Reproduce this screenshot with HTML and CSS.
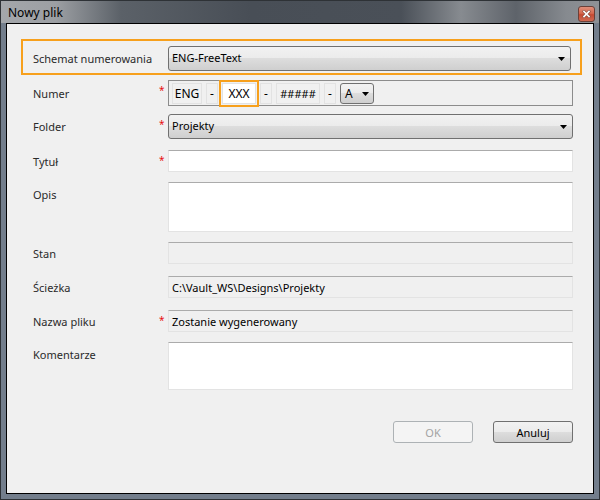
FILE: index.html
```html
<!DOCTYPE html>
<html lang="pl">
<head>
    <meta charset="UTF-8">
    <title>Nowy plik</title>
    <link rel="stylesheet" href="styles.css">
</head>
<body>
    <div class="window">
        <div class="titlebar">
            <span class="title">Nowy plik</span>
            <div class="close">
                <svg width="9" height="8" viewBox="0 0 9 8">
                    <path d="M2 1.5 L7 6.5 M7 1.5 L2 6.5" stroke="#8a5246" stroke-width="3" stroke-linecap="square"/>
                    <path d="M2 1.5 L7 6.5 M7 1.5 L2 6.5" stroke="#ffffff" stroke-width="1.6" stroke-linecap="square"/>
                </svg>
            </div>
        </div>

        <div class="content">
            <div class="row schema">
                <span class="label">Schemat numerowania</span>
                <span></span>
                <div class="combo">
                    <span>ENG-FreeText</span>
                    <svg class="arrow" width="7" height="4" viewBox="0 0 7 4"><path d="M0 0 H7 L3.5 4 Z" fill="#000"/></svg>
                </div>
            </div>

            <div class="row numer">
                <span class="label">Numer</span>
                <span class="req">*</span>
                <div class="number">
                    <span class="seg eng">ENG</span>
                    <span class="seg dash">-</span>
                    <span class="seg edit">XXX</span>
                    <span class="seg dash">-</span>
                    <span class="seg hash">#####</span>
                    <span class="seg dash">-</span>
                    <div class="combo small">
                        <span>A</span>
                        <svg class="arrow" width="7" height="4" viewBox="0 0 7 4"><path d="M0 0 H7 L3.5 4 Z" fill="#000"/></svg>
                    </div>
                </div>
            </div>

            <div class="row folder">
                <span class="label">Folder</span>
                <span class="req">*</span>
                <div class="combo">
                    <span>Projekty</span>
                    <svg class="arrow" width="7" height="4" viewBox="0 0 7 4"><path d="M0 0 H7 L3.5 4 Z" fill="#000"/></svg>
                </div>
            </div>

            <div class="row tytul">
                <span class="label">Tytuł</span>
                <span class="req">*</span>
                <div class="textbox"></div>
            </div>

            <div class="row multi opis">
                <span class="label">Opis</span>
                <span></span>
                <div class="textbox tall"></div>
            </div>

            <div class="row stan">
                <span class="label">Stan</span>
                <span></span>
                <div class="textbox disabled"></div>
            </div>

            <div class="row sciezka">
                <span class="label">Ścieżka</span>
                <span></span>
                <div class="textbox disabled">C:\Vault_WS\Designs\Projekty</div>
            </div>

            <div class="row nazwa">
                <span class="label">Nazwa pliku</span>
                <span class="req">*</span>
                <div class="textbox disabled">Zostanie wygenerowany</div>
            </div>

            <div class="row multi komentarze">
                <span class="label">Komentarze</span>
                <span></span>
                <div class="textbox tall"></div>
            </div>

            <div class="buttons">
                <button class="btn" disabled>OK</button>
                <button class="btn">Anuluj</button>
            </div>
        </div>
    </div>
</body>
</html>
```

FILE: styles.css
```css
body {
    margin: 0;
    font-family: 'Noto Sans', sans-serif;
    font-size: 11px;
    color: #2a2a2a;
}

.window {
    width: 598px;
    height: 498px;
    border: 1px solid #2e3236;
    background: #737e8c;
    display: flex;
    flex-direction: column;
}

.titlebar {
    height: 22px;
    display: flex;
    align-items: center;
    justify-content: space-between;
    padding: 0 4px 0 7px;
    background: linear-gradient(90deg, #a4a7ab 0, #9c9fa3 55px, #5b6168 120px, #484e56 250px, #4a5058 400px, #878b90 460px, #5e636a 515px, #868a8f 565px, #8e9196 598px);
}

.title {
    font-size: 12px;
    color: #000;
}

.close {
    width: 15px;
    height: 14px;
    margin-top: 3px;
    border: 1px solid #6b4038;
    border-radius: 3px;
    background: linear-gradient(#e08e7a 0%, #d5694f 45%, #c54a32 55%, #d06a52 100%);
    display: flex;
    align-items: center;
    justify-content: center;
}

.content {
    flex: 1;
    margin: 0 5px 5px 5px;
    border: 1px solid #000;
    background: #f0f0f0;
    padding: 15px 11px 0 14px;
}

.row {
    display: grid;
    grid-template-columns: 123px 12px 1fr;
    align-items: center;
    padding: 0 9px 0 12px;
}

.row.multi {
    align-items: start;
}

.row.multi .label {
    line-height: 26px;
}

.row.schema {
    border: 2px solid #f7a01c;
    padding: 5px 9px 2px 10px;
}

.numer { margin-top: 5px; }
.folder { margin-top: 8px; }
.tytul { margin-top: 11px; }
.opis { margin-top: 10px; }
.stan { margin-top: 10px; }
.sciezka { margin-top: 12px; }
.nazwa { margin-top: 12px; }
.komentarze { margin-top: 10px; }

.req {
    color: #e81010;
    font-size: 10px;
    padding-left: 3px;
    align-self: start;
    margin-top: 3px;
}

.combo {
    height: 23px;
    border: 1px solid #707070;
    border-radius: 3px;
    background: linear-gradient(#f2f2f2 0%, #ebebeb 50%, #dddddd 50%, #cfcfcf 100%);
    display: flex;
    align-items: center;
    justify-content: space-between;
    padding: 0 5px 0 3px;
    color: #000;
}

.combo span {
    margin-top: -3px;
}

.combo .arrow {
    margin-top: 1px;
}

.combo.small {
    width: 24px;
    height: 19px;
    padding: 0 4px 0 4px;
    font-size: 12px;
}

.combo.small span {
    margin-top: 0;
}

.number {
    height: 24px;
    border: 1px solid #8c8c8c;
    display: flex;
    align-items: center;
    gap: 4px;
    padding-left: 3px;
}

.seg {
    height: 19px;
    border: 1px solid #e2e2e2;
    display: flex;
    align-items: center;
    justify-content: center;
    color: #000;
    font-size: 12px;
}

.seg.eng { width: 28px; }
.seg.dash { width: 10px; }
.seg.hash { width: 42px; font-size: 11px; }

.seg.edit {
    width: 32px;
    background: #fff;
    outline: 2px solid #f7a01c;
    outline-offset: 1px;
}

.textbox {
    height: 20px;
    border: 1px solid #e3e3e3;
    border-top-color: #ababab;
    background: #fff;
    padding-left: 3px;
    display: flex;
    align-items: center;
    color: #000;
}

.textbox.tall {
    height: 48px;
}

.komentarze .textbox.tall {
    height: 46px;
}

.textbox.disabled {
    background: #f0f0f0;
}

.buttons {
    display: flex;
    justify-content: flex-end;
    gap: 20px;
    margin-top: 31px;
    padding-right: 9px;
}

.btn {
    width: 80px;
    height: 22px;
    border: 1px solid #707070;
    border-radius: 3px;
    background: linear-gradient(#f2f2f2 0%, #ebebeb 50%, #dddddd 50%, #cfcfcf 100%);
    font-family: 'Noto Sans', sans-serif;
    font-size: 11px;
    color: #000;
    padding: 0;
}

.btn:disabled {
    border-color: #adb2b5;
    background: #f4f4f4;
    color: #a3a3a3;
}
```
